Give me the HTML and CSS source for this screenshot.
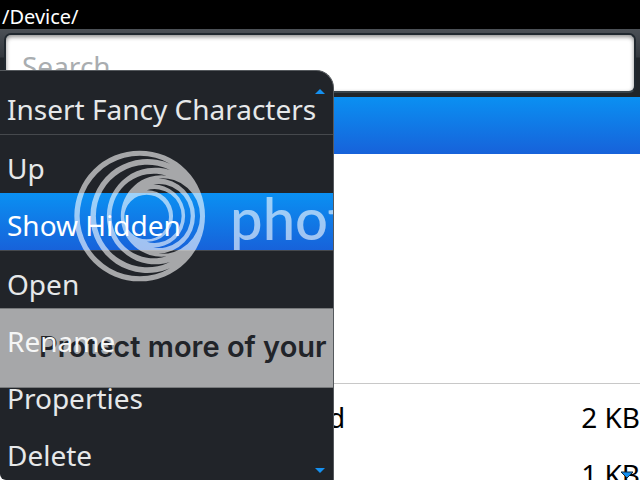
FILE: index.html
```html
<!DOCTYPE html>
<html lang="en">
<head>
    <meta charset="utf-8">
    <title>/Device/</title>
    <link rel="stylesheet" href="styles.css">
</head>
<body>
    <div class="screen">
        <header class="title-bar">/Device/</header>

        <div class="search-bar">
            <input type="text" class="search" placeholder="Search" aria-label="Search">
        </div>

        <main class="files">
            <div class="selected-row"></div>
            <div class="empty-area"></div>
            <table class="file-list">
                <tr><td class="name">d</td><td class="size">2 KB</td></tr>
                <tr><td class="name">l</td><td class="size">1 KB</td></tr>
            </table>
        </main>
        <svg class="page-arrow" viewBox="0 0 14 8"><path d="M1 1H13L7 7z" fill="#1590f0" stroke="#12283c"/></svg>

        <nav class="menu">
            <div class="watermark">
                <svg class="logo" viewBox="0 0 420 420">
                    <path fill="#fff" fill-opacity="0.6" fill-rule="evenodd" d="M13 213a196 196 0 1 0 392 0a196 196 0 1 0 -392 0z
                        M300 56A181 181 0 1 0 300 370A171 171 0 1 1 300 56z
                        M300 75A154 154 0 1 0 300 351A145 145 0 1 1 300 75z
                        M290 92A127 127 0 1 0 290 334A122 122 0 1 1 290 92z
                        M265 100A113.6 113.6 0 1 1 265 326A113.04 113.04 0 0 0 265 100z
                        M245 119A96.3 96.3 0 1 1 245 307A94.2 94.2 0 1 0 245 119z
                        M230 136A80.7 80.7 0 1 1 230 290A77.03 77.03 0 1 0 230 136z
                        M163 216a67 67 0 1 0 134 0a67 67 0 1 0 -134 0z"/>
                </svg>
                <span class="brand">photobucket</span>
            </div>
            <div class="banner">Protect more of your</div>
            <span class="arrow arrow-up menu-up"></span>
            <ul class="items">
                <li><button>Insert Fancy Characters</button></li>
                <li class="gap"><button>Up</button></li>
                <li class="selected"><button>Show Hidden</button></li>
                <li class="gap"><button>Open</button></li>
                <li class="bright"><button>Rename</button></li>
                <li><button>Properties</button></li>
                <li><button>Delete</button></li>
            </ul>
            <span class="arrow arrow-down menu-down"></span>
        </nav>
    </div>
</body>
</html>
```

FILE: styles.css
```css
* {
    box-sizing: border-box;
}

body {
    margin: 0;
    font-family: "Noto Sans", sans-serif;
    font-size: 28px;
    background: #fff;
    color: #000;
}

.screen {
    position: relative;
    height: 100vh;
    overflow: hidden;
}

.title-bar {
    height: 29px;
    padding: 4px 2px 0;
    background: #000;
    color: #fff;
    font-size: 20px;
    line-height: 26px;
}

.search-bar {
    height: 68px;
    padding: 4px;
    background: linear-gradient(#4b5056, #33383e 28px, #20252a 29px);
}

.search {
    display: block;
    width: 100%;
    height: 60px;
    padding: 6px 16px 0;
    border: 2px solid #20282f;
    border-bottom-color: #39444b;
    border-radius: 7px;
    background: #fff;
    box-shadow: inset 0 2px 4px rgba(0, 0, 0, 0.45);
    font: inherit;
}

.search::placeholder {
    color: #a9adb0;
}

.selected-row {
    height: 57px;
    background: linear-gradient(#0a90f2, #1762da);
}

.empty-area {
    height: 229px;
}

.file-list {
    width: 100%;
    border-collapse: collapse;
    border-top: 1px solid #c8c8c8;
}

.file-list td {
    height: 57px;
    padding: 10px 0 0;
}

.file-list .name {
    padding-left: 328px;
}

.size {
    text-align: right;
}

.menu {
    position: absolute;
    left: 0;
    top: 70px;
    bottom: 0;
    overflow: hidden;
    border: 1px solid #55595d;
    border-left: none;
    border-bottom: none;
    border-radius: 0 18px 0 6px;
    background: #212429;
}

.items {
    position: relative;
    margin: 0;
    padding: 6px 0 0;
    list-style: none;
}

.items li {
    height: 57px;
}

.items .gap {
    height: 59px;
    border-top: 1px solid #46494d;
}

.items .selected {
    background: linear-gradient(#0a90f2, #1762da);
}

.items button {
    display: block;
    width: 100%;
    height: 57px;
    padding: 6px 17px 0 7px;
    border: none;
    background: none;
    color: #e6e8e9;
    font: inherit;
    text-align: left;
    white-space: nowrap;
}

.items .gap button {
    height: 59px;
}

.items .selected button {
    color: #fff;
}

.items .bright button {
    color: #f5f6f6;
}

.watermark {
    position: absolute;
    z-index: 1;
    left: 70px;
    top: 74px;
    display: flex;
    align-items: center;
    pointer-events: none;
}

.logo {
    width: 140px;
    height: 140px;
}

.brand {
    margin-left: 20px;
    padding-top: 4px;
    color: rgba(255, 255, 255, 0.6);
    font-family: Lato, sans-serif;
    font-size: 58px;
    font-weight: 500;
}

.banner {
    position: absolute;
    left: 0;
    right: 0;
    top: 237px;
    height: 80px;
    padding-left: 39px;
    border: 1px solid #77797b;
    border-width: 1px 0;
    background: #a6a7a9;
    color: #212429;
    font-family: Inter, sans-serif;
    font-size: 29px;
    font-weight: 600;
    line-height: 76px;
    white-space: nowrap;
}

.arrow {
    position: absolute;
    border: 5px solid transparent;
    border-width: 0 5px;
}

.arrow-up {
    border-bottom: 5px solid #1590f0;
}

.arrow-down {
    border-top: 5px solid #1590f0;
}

.menu-up {
    right: 8px;
    top: 18px;
}

.menu-down {
    right: 8px;
    bottom: 7px;
}

.page-arrow {
    position: absolute;
    right: 6px;
    bottom: 1px;
    width: 14px;
    height: 8px;
}
```
